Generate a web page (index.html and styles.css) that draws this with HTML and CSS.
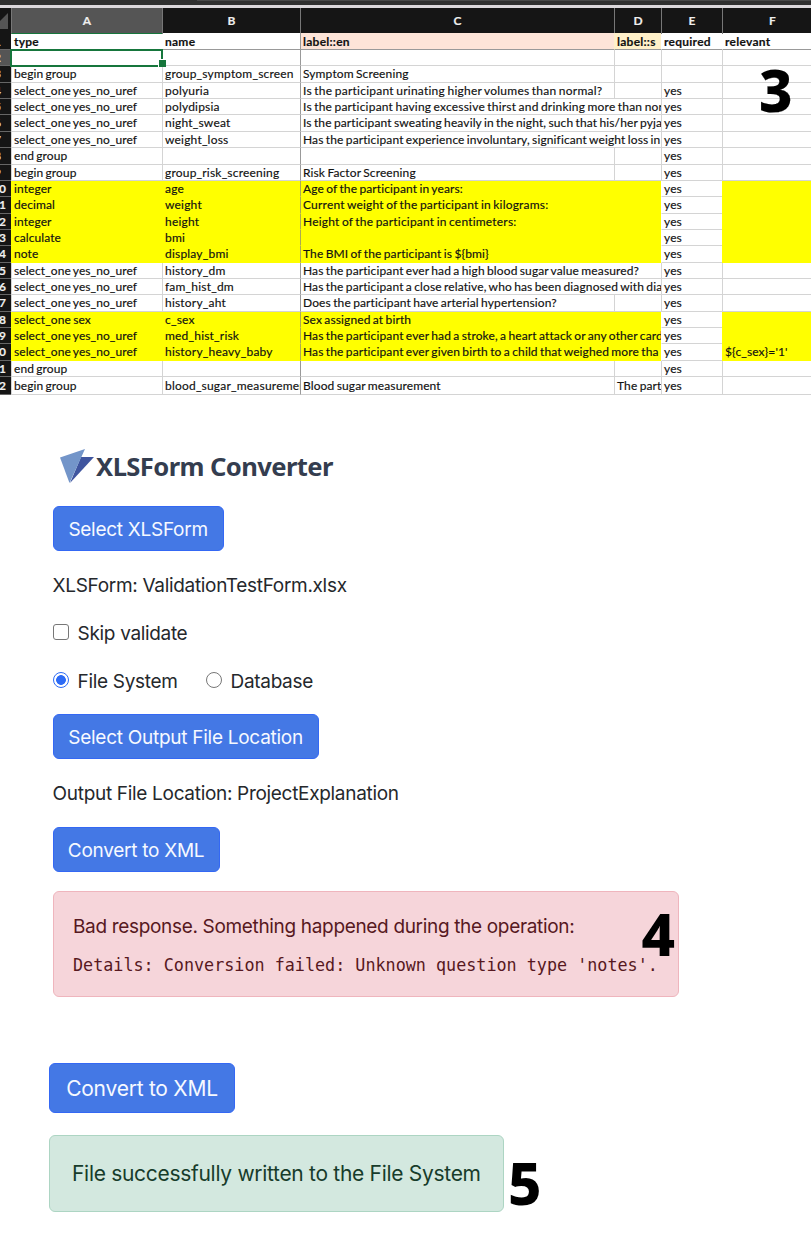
FILE: index.html
```
<!DOCTYPE html>
<html lang="en">
<head>
<meta charset="utf-8">
<title>XLSForm Converter</title>
<link rel="stylesheet" href="styles.css">
</head>
<body>
<main class="page">
  <section class="sheet">
    <div class="toolbar"><i></i></div>
    <div class="row cols"><span class="corner"><svg viewBox="0 0 11 24" width="11" height="24"><path d="M8 5V21H0V13Z" fill="#555"/></svg></span><b class="active">A</b><b>B</b><b>C</b><b>D</b><b>E</b><b class="colf">F</b></div>
    <div class="row names"><span class="n">1</span><span>type</span><span>name</span><span class="en">label::en</span><span class="es">label::s</span><span>required</span><span>relevant</span></div>
    <div class="row sel"><span class="n">2</span><span class="picked"></span><span></span><span></span><span></span><span></span><span></span></div>
    <div class="row"><span class="n">3</span><span>begin group</span><span>group_symptom_screen</span><span>Symptom Screening</span><span></span><span></span><span></span></div>
    <div class="row"><span class="n">4</span><span>select_one yes_no_uref</span><span>polyuria</span><span class="loose">Is the participant urinating higher volumes than normal?</span><span></span><span>yes</span><span></span></div>
    <div class="row"><span class="n">5</span><span>select_one yes_no_uref</span><span>polydipsia</span><span class="wide loose">Is the participant having excessive thirst and drinking more than nor</span><span>yes</span><span></span></div>
    <div class="row"><span class="n">6</span><span>select_one yes_no_uref</span><span>night_sweat</span><span class="wide">Is the participant sweating heavily in the night, such that his/her pyja</span><span>yes</span><span></span></div>
    <div class="row"><span class="n">7</span><span>select_one yes_no_uref</span><span>weight_loss</span><span class="wide">Has the participant experience involuntary, significant weight loss in</span><span>yes</span><span></span></div>
    <div class="row"><span class="n">8</span><span>end group</span><span></span><span></span><span></span><span>yes</span><span></span></div>
    <div class="row"><span class="n">9</span><span>begin group</span><span>group_risk_screening</span><span>Risk Factor Screening</span><span></span><span>yes</span><span></span></div>
    <div class="row hot"><span class="n">10</span><span>integer</span><span>age</span><span class="wide">Age of the participant in years:</span><span class="req">yes</span><span></span></div>
    <div class="row hot"><span class="n">11</span><span>decimal</span><span>weight</span><span class="wide loose">Current weight of the participant in kilograms:</span><span class="req">yes</span><span></span></div>
    <div class="row hot"><span class="n">12</span><span>integer</span><span>height</span><span class="wide loose">Height of the participant in centimeters:</span><span class="req">yes</span><span></span></div>
    <div class="row hot"><span class="n">13</span><span>calculate</span><span>bmi</span><span class="wide"></span><span class="req">yes</span><span></span></div>
    <div class="row hot"><span class="n">14</span><span>note</span><span>display_bmi</span><span class="wide">The BMI of the participant is ${bmi}</span><span class="req">yes</span><span></span></div>
    <div class="row"><span class="n">15</span><span>select_one yes_no_uref</span><span>history_dm</span><span class="wide">Has the participant ever had a high blood sugar value measured?</span><span>yes</span><span></span></div>
    <div class="row"><span class="n">16</span><span>select_one yes_no_uref</span><span>fam_hist_dm</span><span class="wide">Has the participant a close relative, who has been diagnosed with dia</span><span>yes</span><span></span></div>
    <div class="row"><span class="n">17</span><span>select_one yes_no_uref</span><span>history_aht</span><span>Does the participant have arterial hypertension?</span><span></span><span>yes</span><span></span></div>
    <div class="row hot"><span class="n">18</span><span>select_one sex</span><span>c_sex</span><span class="wide">Sex assigned at birth</span><span class="req">yes</span><span></span></div>
    <div class="row hot"><span class="n">19</span><span>select_one yes_no_uref</span><span>med_hist_risk</span><span class="wide">Has the participant ever had a stroke, a heart attack or any other card</span><span class="req">yes</span><span></span></div>
    <div class="row hot"><span class="n">20</span><span>select_one yes_no_uref</span><span>history_heavy_baby</span><span class="wide">Has the participant ever given birth to a child that weighed more tha</span><span class="req">yes</span><span>${c_sex}='1'</span></div>
    <div class="row"><span class="n">21</span><span>end group</span><span></span><span></span><span></span><span>yes</span><span></span></div>
    <div class="row last"><span class="n">22</span><span>begin group</span><span>blood_sugar_measuremen</span><span>Blood sugar measurement</span><span>The part</span><span>yes</span><span></span></div>
    <strong class="step step3">3</strong>
  </section>

  <section class="converter">
    <h1 class="title"><svg class="logo" viewBox="0 0 36 36" width="36" height="36"><path d="M21 8H34L10 34Z" fill="#3f559f"/><path d="M0 8.500 25 0 9.500 34Z" fill="#7395c9"/></svg><span>XLSForm Converter</span></h1>
    <button class="btn b1">Select XLSForm</button>
    <p class="line">XLSForm: ValidationTestForm.xlsx</p>
    <label class="opt"><i class="box"></i><span>Skip validate</span></label>
    <div class="opts">
      <label class="opt fs"><i class="dot on"></i><span>File System</span></label>
      <label class="opt"><i class="dot"></i><span>Database</span></label>
    </div>
    <button class="btn b2">Select Output File Location</button>
    <p class="line out">Output File Location: ProjectExplanation</p>
    <button class="btn b3">Convert to XML</button>
    <div class="alert bad">
      <p>Bad response. Something happened during the operation:</p>
      <code>Details: Conversion failed: Unknown question type 'notes'.</code>
      <strong class="step step4">4</strong>
    </div>
  </section>

  <section class="result">
    <button class="btn big">Convert to XML</button>
    <div class="done">
      <div class="alert good">File successfully written to the File System</div>
      <strong class="step step5">5</strong>
    </div>
  </section>
</main>
</body>
</html>
```
FILE: styles.css
```
* { box-sizing: border-box; }
body { margin: 0; background: #fff; font-family: Inter, "Liberation Sans", sans-serif; color: #25282c; }
.page { width: 811px; height: 1240px; overflow: hidden; }

/* Spreadsheet */
.sheet { position: relative; height: 396px; font: 12px/16px Lato, "Open Sans", sans-serif; letter-spacing: .12px; word-spacing: -.9px; color: #111; -webkit-text-stroke: .15px currentColor; }
.toolbar { height: 8px; background: #303030; border-bottom: 3px solid #dcd8dc; padding-left: 197px; }
.toolbar i { display: block; height: 1px; background: #494949; }
.row { display: grid; grid-template-columns: 11px 151px 138px 314px 47px 61px 1fr; height: 16.37px; }
.row > span { border-left: 1px solid #d4d4d4; border-bottom: 1px solid #d4d4d4; padding-left: 2px; white-space: nowrap; overflow: hidden; min-width: 0; }
.row > span:nth-child(2) { letter-spacing: .08px; }
.row > span:nth-child(3) { letter-spacing: .2px; }
.row > span:nth-child(4) { border-left-color: #999; }
.row > .loose { letter-spacing: .2px; }
.row > .loose:not(.wide) { letter-spacing: .24px; }
.row > .wide { grid-column: span 2; }
.row > .n { background: #151515; color: #eee; font-weight: 700; border: 0; border-bottom: 1px solid #666; padding: 0; text-indent: -8px; }
.row:nth-child(-n+11) > .n { text-indent: -6px; }
.cols { height: 25px; background: #151515; color: #eee; line-height: 25px; }
.cols b { text-align: center; border-left: 1px solid #777; }
.cols .colf { padding-left: 11px; }
.cols .active { background: #555; border-bottom: 1px solid #16763c; }
.row > .corner { padding: 0; border: 0; }
.names { font-weight: 700; height: 17px; line-height: 17px; }
.row.names > span { letter-spacing: .25px; }
.names > span { border-left-color: transparent; border-bottom-color: #999; }
.names > .en { background: #fde4d8; }
.names > .es { background: #fff0c9; }
.row.sel > .n { background: #555; }
.row > .picked { position: relative; overflow: visible; outline: 2px solid #16763c; outline-offset: -1px; }
.picked::after { content: ""; position: absolute; right: -4px; bottom: -2px; width: 7px; height: 7px; background: #16763c; border: 1px solid #fff; border-width: 1px 0 0 1px; }
.row.hot > span { background: #ff0; border-color: #ff0; }
.row.hot > span:nth-child(4) { border-left-color: #aaa855; }
.row.hot > .req { background: #fff; border-color: #fff #fff #d4d4d4 #fff; }
.row.hot > .n { background: #151515; border-color: #666; }
.last { height: 18px; line-height: 18px; }

/* Step numbers laid over the captures */
.step { position: absolute; font: 800 58px/58px "Noto Sans", "Open Sans", sans-serif; letter-spacing: 0; color: #000; }
.step3 { left: 759px; top: 61px; }
.step4 { left: 588px; top: 13px; }
.step5 { left: 459px; top: 19px; }

/* Converter form */
.converter { display: flex; flex-direction: column; align-items: flex-start; padding: 53px 0 0 52.6px; height: 667px; }
.title { display: flex; align-items: flex-start; margin: 0 0 21px; height: 36px; padding-left: 7px; font: 700 25.6px/35px "Noto Sans", "Open Sans", sans-serif; color: #343d4f; white-space: nowrap; }
.title span { letter-spacing: -.6px; margin-left: .5px; }
.logo { flex: none; }
.btn { height: 45px; padding: 0; border: 1px solid #3468f4; border-radius: 6px; background: #4478e5; color: #f6f9ff; font: 400 19px/45px Inter, sans-serif; white-space: nowrap; letter-spacing: -.27px; }
.b1 { width: 171px; }
.b2 { width: 266px; }
.b3 { width: 167px; }
.line { margin: 20px 0 20px; height: 28px; font-size: 19px; line-height: 29px; letter-spacing: -.31px; white-space: nowrap; }
.line.out { line-height: 30px; }
.opt { display: flex; align-items: center; height: 28px; gap: 9px; font-size: 19px; letter-spacing: -.33px; }
.opts { display: flex; margin: 20px 0 19px; }
.fs { width: 153px; }
.box, .dot { width: 16px; height: 16px; border: 1px solid #777; border-radius: 3px; background: #fff; flex: none; margin-top: -2px; }
.dot { border-radius: 50%; }
.dot.on { border-color: #2d6bf5; background: radial-gradient(circle, #2d6bf5 4.5px, #fff 5.2px); }
.b3 + .alert { margin-top: 19px; }
.alert { position: relative; border: 1px solid; border-radius: 6px; white-space: nowrap; }
.bad { width: 626px; height: 106px; padding: 21px 19.4px 0; background: #f6d5da; border-color: #efb5bd; color: #571821; }
.bad p { margin: 0 0 10px; font-size: 19px; line-height: 28px; letter-spacing: -.33px; }
.bad code { display: block; font: 16.76px/28px "DejaVu Sans Mono", monospace; }

/* Result */
.result { padding-left: 49px; }
.big { display: block; width: 186px; height: 50px; font-size: 21px; line-height: 49px; letter-spacing: -.24px; }
.done { position: relative; margin-top: 22px; }
.good { width: 455px; height: 77px; padding-left: 22px; font-size: 21px; line-height: 76px; letter-spacing: -.3px; background: #d3e8df; border-color: #add5c3; color: #173c2b; }
```
